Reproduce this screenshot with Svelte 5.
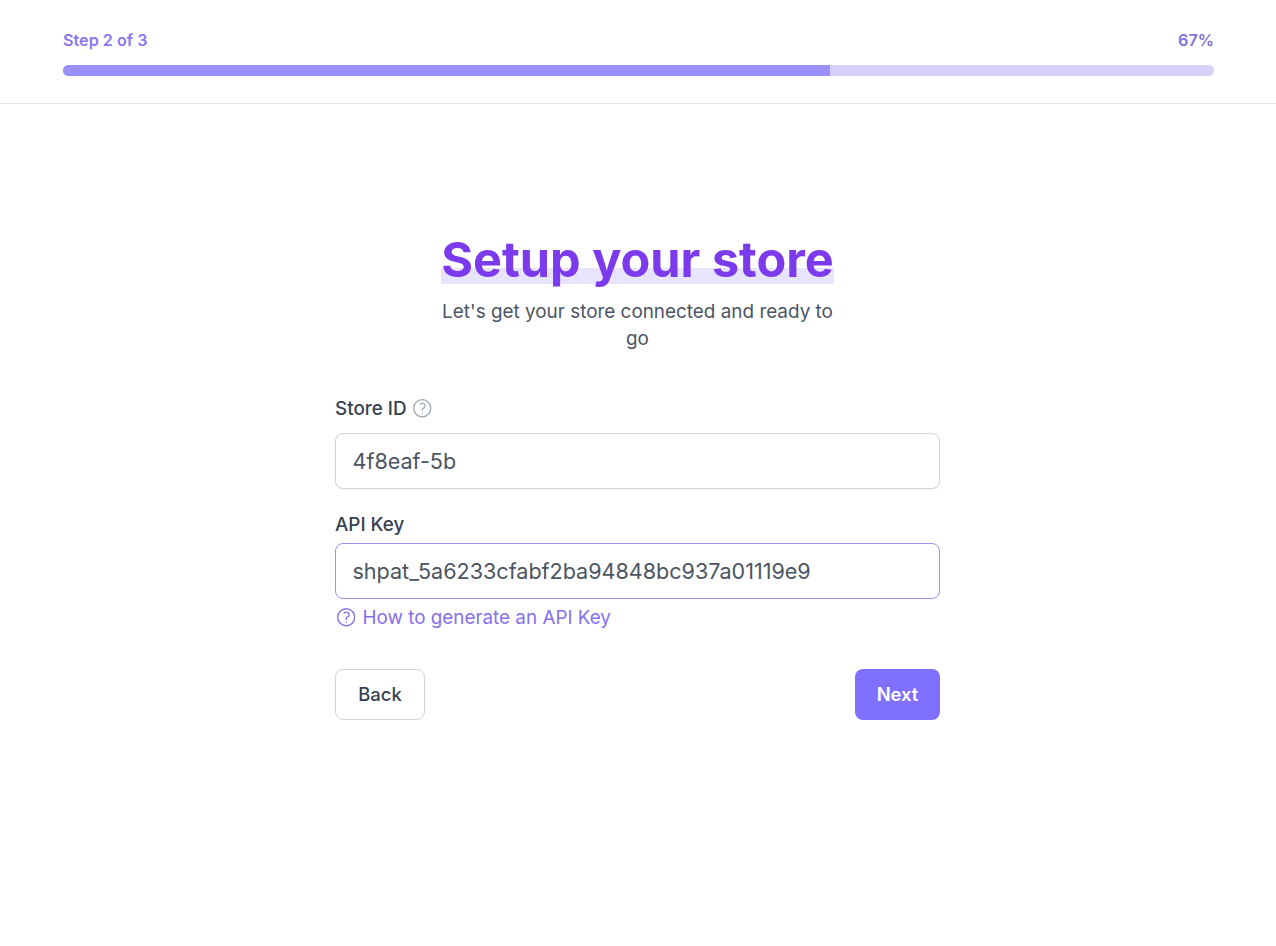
<script>
  let storeId = $state('4f8eaf-5b');
  let apiKey = $state('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');
  const helpPath = 'M9.879 7.519c1.171-1.025 3.071-1.025 4.242 0 1.172 1.025 1.172 2.687 0 3.712-.203.179-.43.326-.67.442-.745.361-1.45.999-1.45 1.827v.75M21 12a9 9 0 11-18 0 9 9 0 0118 0zm-9 5.25h.008v.008H12v-.008z';
</script>

<div class="page">
  <header class="top">
    <div class="meta">
      <span class="step">Step 2 of 3</span>
      <span class="pct">67%</span>
    </div>
    <div class="track"><div class="fill"></div></div>
  </header>

  <main class="main">
    <div class="heading">
      <h1>Setup your store</h1>
      <p>Let's get your store connected and ready to go</p>
    </div>

    <form class="form" onsubmit={(e) => e.preventDefault()}>
      <div class="field first">
        <label for="store">Store ID
          <svg class="help" viewBox="2.25 2.25 19.5 19.5" fill="none" stroke="currentColor" stroke-width="1.3" stroke-linecap="round" stroke-linejoin="round"><path d={helpPath}/></svg>
        </label>
        <input id="store" bind:value={storeId} />
      </div>

      <div class="field second">
        <label for="key">API Key</label>
        <input id="key" class="active" bind:value={apiKey} />
        <a class="link" href="#key">
          <svg class="help link-icon" viewBox="2.25 2.25 19.5 19.5" fill="none" stroke="currentColor" stroke-width="1.45" stroke-linecap="round" stroke-linejoin="round"><path d={helpPath}/></svg>
          How to generate an API Key
        </a>
      </div>

      <div class="actions">
        <button type="button" class="back">Back</button>
        <button type="submit" class="next">Next</button>
      </div>
    </form>
  </main>
</div>

<style>
  :global(body) {
    margin: 0;
    background: #fff;
    font-family: Inter, "Liberation Sans", sans-serif;
  }
  .page {
    min-height: 946px;
    background: #fff;
  }
  .top {
    box-sizing: border-box;
    height: 104px;
    padding: 30px 62px 0 63px;
    border-bottom: 1px solid #e5e7eb;
  }
  .meta {
    display: flex;
    justify-content: space-between;
    font-size: 16.2px;
    line-height: 20px;
    font-weight: 600;
    color: #8b78f0;
  }
  .pct {
    color: #8070e0;
  }
  .track {
    height: 11px;
    margin-top: 15px;
    border-radius: 6px;
    background: #d6d0fa;
    overflow: hidden;
  }
  .fill {
    width: 66.67%;
    height: 100%;
    background: #9990fb;
  }
  .main {
    display: flex;
    flex-direction: column;
    align-items: center;
    padding-top: 126px;
  }
  .heading {
    width: 393px;
    margin-right: 1px;
    text-align: center;
  }
  h1 {
    margin: 0;
    padding-top: 1px;
    font-size: 48.6px;
    line-height: 58px;
    font-weight: 700;
    color: #7c3aed;
    white-space: nowrap;
    background: linear-gradient(#e8e4fd, #e8e4fd) no-repeat 0 38px / 100% 16px;
  }
  .heading p {
    margin: 0;
    padding-top: 9px;
    font-size: 18.9px;
    line-height: 27px;
    color: #4b5563;
  }
  .form {
    width: 605px;
    margin-right: 1px;
    padding-top: 43px;
  }
  .field {
    display: flex;
    flex-direction: column;
  }
  label {
    display: flex;
    align-items: center;
    gap: 6.5px;
    font-size: 18.85px;
    line-height: 27px;
    font-weight: 500;
    color: #374151;
  }
  .first label {
    margin-bottom: 11px;
  }
  .second {
    margin-top: 22px;
  }
  .second label {
    margin-bottom: 5px;
  }
  .help {
    width: 18.5px;
    height: 18.5px;
    color: #9ca3af;
    flex: none;
  }
  input {
    box-sizing: border-box;
    width: 100%;
    height: 56px;
    padding: 0 16.5px;
    border: 1px solid #d1d5db;
    border-radius: 8px;
    box-shadow: 0 1px 2px rgba(0, 0, 0, 0.05);
    background: #fff;
    font: 400 21.55px/28px Inter, "Liberation Sans", sans-serif;
    color: #4b5563;
    outline: none;
  }
  input.active {
    border-color: #9d90f0;
    box-shadow: none;
  }
  .link {
    display: flex;
    align-items: center;
    gap: 7.5px;
    margin-top: 5px;
    padding-left: 1.5px;
    font-size: 18.85px;
    line-height: 27px;
    color: #8570ee;
    text-decoration: none;
  }
  .link-icon {
    color: #8570ee;
  }
  .actions {
    display: flex;
    justify-content: space-between;
    margin-top: 38px;
  }
  button {
    box-sizing: border-box;
    height: 51px;
    border-radius: 8px;
    font: 600 18.4px/27px Inter, "Liberation Sans", sans-serif;
    cursor: pointer;
  }
  .back {
    width: 90px;
    border: 1px solid #d1d5db;
    background: #fff;
    font-weight: 500;
    color: #374151;
  }
  .next {
    width: 85px;
    border: 0;
    background: #8070ff;
    color: #fff;
  }
</style>
